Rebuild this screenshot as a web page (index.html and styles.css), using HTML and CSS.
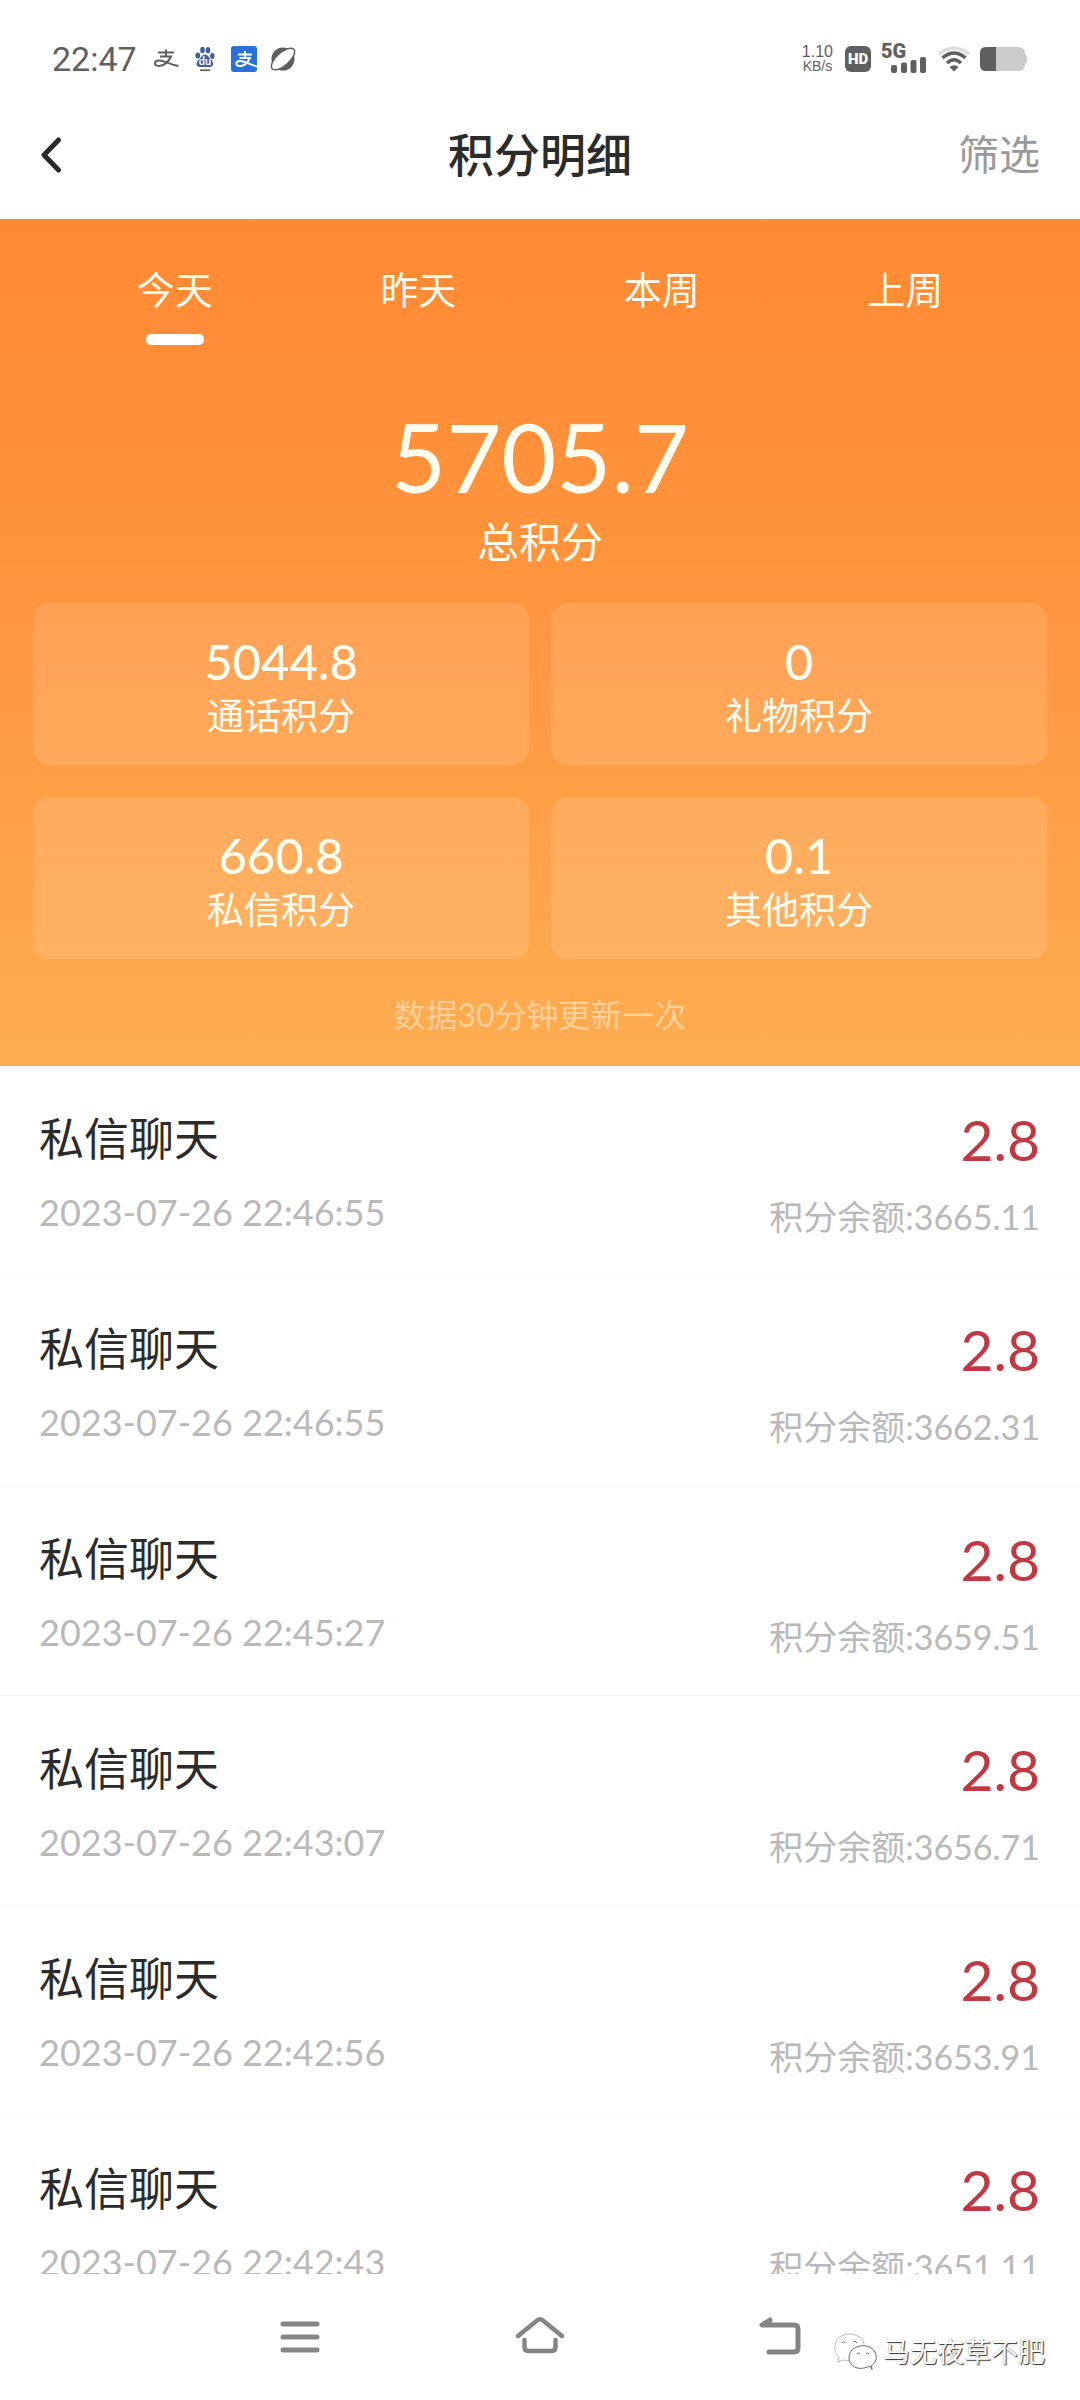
FILE: index.html
```html
<!DOCTYPE html>
<html lang="zh-CN">
<head>
<meta charset="utf-8">
<meta name="viewport" content="width=device-width, initial-scale=1">
<title>积分明细</title>
<link rel="stylesheet" href="styles.css">
</head>
<body>
<div class="app">
  <div class="status">
    <div class="status-left">
      <span class="clock">22:47</span>
      <svg class="ic-pay" viewBox="0 0 26 20" width="26" height="20"><path d="M4 3.5H20M12 .5V7.5M6 7.5H17C15 12 10 17.5 4.5 17C-.5 16.500 0 11.500 5 11.500C11 11.500 14 15 24.500 17" fill="none" stroke="#5f5f5f" stroke-width="2"/></svg>
      <span class="paw">
        <svg viewBox="0 0 20 26" width="20" height="26"><g fill="#3f5f9f"><ellipse cx="2.800" cy="9.500" rx="2.400" ry="3"/><ellipse cx="7.500" cy="4" rx="2.300" ry="3.200"/><ellipse cx="13" cy="4.300" rx="2.300" ry="3.200"/><ellipse cx="17.300" cy="10" rx="2.200" ry="3"/><path d="M10 8.500C13 8.500 14 12 16.500 14C19 16.500 18.500 21 15 21C12 21 8 21 5 21C1 21 .5 16.500 3.500 14C6 12 7 8.500 10 8.500Z"/><path d="M5 23.500H15V25H5Z" fill="#555"/></g></svg>
        <span class="paw-text">du</span>
      </span>
      <svg class="ic-blue" viewBox="0 0 26 26" width="26" height="26"><rect width="26" height="26" rx="3" fill="#2672d9"/><path d="M7 8.500H21M14 5V12M8.500 12H19C17 16 13 20.500 8.500 20C4 19.500 4.500 15 9 15C14 15 17 18 26 20.500" fill="none" stroke="#fff" stroke-width="2"/></svg>
      <svg viewBox="0 0 26 26" width="26" height="26"><circle cx="13" cy="13" r="11.500" fill="#5f5f5f"/><ellipse cx="13" cy="13" rx="14.500" ry="6.500" transform="rotate(-42 13 13)" fill="#fff" stroke="#5f5f5f" stroke-width="1.500"/></svg>
    </div>
    <div class="status-right">
      <span class="speed"><span>1.10</span><span class="unit">KB/s</span></span>
      <span class="hd">HD</span>
      <span class="cell"><span class="cell-text">5G</span>
        <svg viewBox="0 0 36 18" width="36" height="18"><g fill="#5f5f5f"><rect y="9" width="6" height="8" rx="2"/><rect x="10" y="6.500" width="6" height="10.500" rx="2"/><rect x="19.500" y="4" width="6" height="13" rx="2"/><rect x="29" y="1" width="6" height="16" rx="2"/></g></svg>
      </span>
      <svg class="wifi" viewBox="0 0 32 26" width="32" height="26"><g fill="none" stroke="#5f5f5f" stroke-width="3.500"><path d="M1 8Q16-3.500 31 8" stroke="#ddd"/><path d="M4.500 12Q16 2 27.500 12"/><path d="M9 17Q16 10.500 23 17"/></g><path d="M11.500 21Q16 17.500 20.500 21L16 25.500Z" fill="#5f5f5f"/></svg>
      <svg viewBox="0 0 48 24" width="48" height="24"><rect width="45" height="24" rx="6" fill="#cbcbcb"/><path d="M44 6Q48 9 47 12Q48 15 44 18Z" fill="#cbcbcb"/><path d="M16 0H6Q0 0 0 6V18Q0 24 6 24H16Z" fill="#5f5f5f"/></svg>
    </div>
  </div>

  <header class="bar">
    <button class="back" aria-label="返回"><svg viewBox="0 0 22 36" width="22" height="36"><path d="M18.500 3L4 18L18.500 33" fill="none" stroke="#2b2b2b" stroke-width="5" stroke-linecap="round" stroke-linejoin="round"/></svg></button>
    <h1 class="title">积分明细</h1>
    <button class="filter">筛选</button>
  </header>

  <section class="summary">
    <nav class="tabs">
      <button class="tab active">今天</button>
      <button class="tab">昨天</button>
      <button class="tab">本周</button>
      <button class="tab">上周</button>
    </nav>
    <div class="total">5705.7</div>
    <div class="total-label">总积分</div>
    <div class="cards">
      <div class="card"><span class="value">5044.8</span><span class="label">通话积分</span></div>
      <div class="card"><span class="value">0</span><span class="label">礼物积分</span></div>
      <div class="card"><span class="value">660.8</span><span class="label">私信积分</span></div>
      <div class="card"><span class="value">0.1</span><span class="label">其他积分</span></div>
    </div>
    <p class="note">数据30分钟更新一次</p>
  </section>

  <ul class="list">
    <li class="row"><div class="what"><span class="name">私信聊天</span><time class="time">2023-07-26 22:46:55</time></div><div class="sum"><span class="points">2.8</span><span class="balance">积分余额:3665.11</span></div></li>
    <li class="row"><div class="what"><span class="name">私信聊天</span><time class="time">2023-07-26 22:46:55</time></div><div class="sum"><span class="points">2.8</span><span class="balance">积分余额:3662.31</span></div></li>
    <li class="row"><div class="what"><span class="name">私信聊天</span><time class="time">2023-07-26 22:45:27</time></div><div class="sum"><span class="points">2.8</span><span class="balance">积分余额:3659.51</span></div></li>
    <li class="row"><div class="what"><span class="name">私信聊天</span><time class="time">2023-07-26 22:43:07</time></div><div class="sum"><span class="points">2.8</span><span class="balance">积分余额:3656.71</span></div></li>
    <li class="row"><div class="what"><span class="name">私信聊天</span><time class="time">2023-07-26 22:42:56</time></div><div class="sum"><span class="points">2.8</span><span class="balance">积分余额:3653.91</span></div></li>
    <li class="row"><div class="what"><span class="name">私信聊天</span><time class="time">2023-07-26 22:42:43</time></div><div class="sum"><span class="points">2.8</span><span class="balance">积分余额:3651.11</span></div></li>
  </ul>

  <nav class="keys">
    <button aria-label="最近任务"><svg viewBox="0 0 40 34" width="40" height="34"><path d="M3 4H37M3 17H37M3 30H37" stroke="#858585" stroke-width="5" stroke-linecap="round"/></svg></button>
    <button aria-label="主屏幕"><svg viewBox="0 0 52 42" width="52" height="42"><path d="M4 20L23 4.500Q26 2 29 4.500L48 20M10.500 24V31Q10.500 35 14.500 35H37.500Q41.500 35 41.500 31V24" fill="none" stroke="#858585" stroke-width="4.500" stroke-linecap="round" stroke-linejoin="round"/></svg></button>
    <button aria-label="返回"><svg viewBox="0 0 44 40" width="44" height="40"><path d="M12 3L4 8H36Q40 8 40 12V31Q40 35 36 35H11M4 8L12 6" fill="none" stroke="#858585" stroke-width="5" stroke-linecap="round" stroke-linejoin="round"/></svg></button>
  </nav>

  <div class="mark">
    <svg viewBox="0 0 44 38" width="44" height="38"><g fill="#fff" stroke="#666" stroke-width="1"><path d="M5 29L6 24C-2 17 1 2 16 1C27 1 32 8 31 14C26 13 17 17 17 25L17 27.500Q13 28 10 27Z" stroke="#bbb"/><path d="M39 36.500L37 33C22 40 13 30 17 20C22 10 40 10 43 22C44 27 42 30 38.500 32.500Z"/><path d="M9 10Q10.500 7 12.500 10M20.500 9Q22.500 7 24 10M24 21Q25.500 19 27 21M33 21Q34.500 19 36 21" fill="none"/></g></svg>
    <span>马无夜草不肥</span>
  </div>
</div>
</body>
</html>
```
FILE: styles.css
```css
* { box-sizing: border-box; }

body {
  margin: 0;
  background: #fff;
  color: #2b2b2b;
  font-family: Lato, "Noto Sans CJK SC", sans-serif;
}

button {
  padding: 0;
  border: 0;
  background: none;
  color: inherit;
  font: inherit;
}

svg { display: block; flex: none; }

.app {
  position: relative;
  display: flex;
  flex-direction: column;
  height: 100vh;
}

/* System status bar */
.status {
  display: flex;
  justify-content: space-between;
  align-items: center;
  height: 118px;
  padding: 0 52px;
  color: #5f5f5f;
}

.status-left,
.status-right { display: flex; align-items: center; }

.clock {
  margin-right: 17px;
  font-family: Roboto, sans-serif;
  font-size: 34px;
  line-height: 40px;
}

.ic-pay { margin-right: 15px; }
.paw { position: relative; margin-right: 16px; }

.paw-text {
  position: absolute;
  left: 4px;
  top: 9px;
  color: #fff;
  font-size: 11px;
  font-weight: 700;
  line-height: 12px;
}

.ic-blue { margin-right: 13px; }

.speed {
  display: flex;
  flex-direction: column;
  align-items: center;
  margin-right: 12px;
  font-family: "Liberation Sans", sans-serif;
  font-size: 16px;
  line-height: 15px;
}

.unit { font-size: 14px; }

.hd {
  width: 26px;
  margin-right: 10px;
  border-radius: 6px;
  background: #5f5f5f;
  color: #fff;
  font-family: Roboto, sans-serif;
  font-size: 15px;
  font-weight: 900;
  line-height: 26px;
  text-align: center;
}

.cell {
  display: flex;
  flex-direction: column;
  align-items: flex-end;
  width: 46px;
  margin-right: 11px;
}

.cell-text {
  align-self: flex-start;
  height: 12px;
  font-family: Roboto, sans-serif;
  font-size: 20px;
  font-weight: 900;
  line-height: 14px;
}

.wifi { margin-right: 10px; }

/* Title bar */
.bar {
  display: grid;
  grid-template-columns: 1fr auto 1fr;
  align-items: center;
  height: 101px;
  padding: 0 40px 28px;
}

.back { justify-self: start; }

.title {
  margin: 0;
  font-size: 46px;
  font-weight: 500;
  line-height: 60px;
}

.filter {
  justify-self: end;
  color: #999;
  font-size: 41px;
  line-height: 60px;
}

/* Points summary */
.summary {
  padding: 39px 33px 27px;
  background: linear-gradient(#ff8933, #ff9740 50%, #fead51);
  color: #fffdf0;
  text-align: center;
}

.tabs {
  display: grid;
  grid-template-columns: repeat(4, 1fr);
  padding: 0 20px;
}

.tab {
  display: flex;
  flex-direction: column;
  align-items: center;
  gap: 14px;
  font-size: 38px;
  line-height: 62px;
}

.active::after {
  content: "";
  width: 58px;
  height: 11px;
  border-radius: 5px;
  background: #fff;
}

.total {
  margin-top: 55px;
  font-size: 95px;
  line-height: 112px;
}

.total-label {
  font-size: 42px;
  line-height: 60px;
}

.cards {
  display: grid;
  grid-template-columns: 1fr 1fr;
  gap: 32px 22px;
  margin-top: 31px;
}

.card {
  display: flex;
  flex-direction: column;
  padding: 30px 0 22px;
  border-radius: 16px;
  background: rgba(255, 255, 255, .12);
}

.value {
  font-size: 49px;
  font-weight: 500;
  line-height: 56px;
}

.label {
  font-size: 37px;
  line-height: 54px;
}

.note {
  margin: 32px 0 0;
  color: #ffd09a;
  font-size: 32px;
  line-height: 48px;
}

/* Records */
.list {
  flex: 1;
  min-height: 0;
  margin: 0;
  padding: 0;
  overflow: hidden;
  list-style: none;
}

.row {
  display: flex;
  justify-content: space-between;
  padding: 43px 40px 36px 39px;
  border-bottom: 1px solid #f6f6f6;
}

.what,
.sum { display: flex; flex-direction: column; }

.what { gap: 21px; }
.sum { gap: 26px; align-items: flex-end; }

.name {
  font-size: 45px;
  line-height: 60px;
}

.time,
.balance {
  color: #b9b9b9;
  line-height: 44px;
}

.time { font-size: 36px; }
.balance { font-size: 34px; }

.points {
  color: #bf3842;
  font-size: 57px;
  line-height: 60px;
}

/* System navigation keys */
.keys {
  display: grid;
  grid-template-columns: repeat(3, 240px);
  justify-content: center;
  align-items: center;
  justify-items: center;
  height: 126px;
}

.mark {
  position: absolute;
  right: 35px;
  bottom: 29px;
  display: flex;
  align-items: center;
  gap: 6px;
  color: #fff;
  font-size: 27px;
  line-height: 38px;
  text-shadow: 1px 1px 1px #333, 0 0 1px #777;
}
```
